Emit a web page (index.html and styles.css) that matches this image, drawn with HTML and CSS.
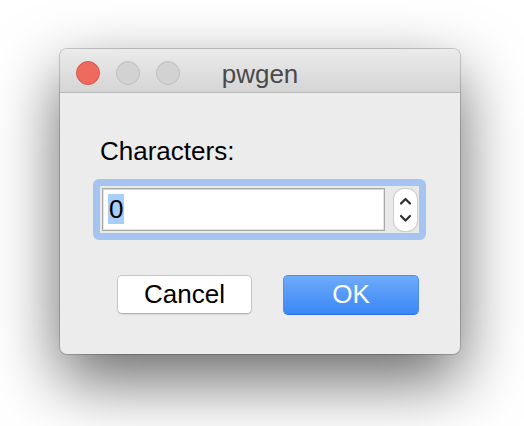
FILE: index.html
```html
<!DOCTYPE html>
<html lang="en">
<head>
<meta charset="utf-8">
<title>pwgen</title>
<link rel="stylesheet" href="styles.css">
</head>
<body>
<div class="page">
  <div class="window">
    <div class="titlebar">
      <div class="lights">
        <span class="light close"></span>
        <span class="light"></span>
        <span class="light"></span>
      </div>
      <div class="title">pwgen</div>
      <div></div>
    </div>
    <div class="content">
      <div class="label">Characters:</div>
      <div class="ring">
        <div class="field"><span class="sel">0</span></div>
        <div class="stepper">
          <svg width="23" height="42" viewBox="0 0 23 42">
            <polyline points="7,14.5 11.5,10 16,14.5" fill="none" stroke="#2e2e2e" stroke-width="2.2" stroke-linecap="round" stroke-linejoin="round"/>
            <polyline points="7,27 11.5,31.5 16,27" fill="none" stroke="#2e2e2e" stroke-width="2.2" stroke-linecap="round" stroke-linejoin="round"/>
          </svg>
        </div>
      </div>
      <div class="buttons">
        <div class="btn cancel">Cancel</div>
        <div class="btn ok">OK</div>
      </div>
    </div>
  </div>
</div>
</body>
</html>
```

FILE: styles.css
```css
html, body {
  margin: 0;
  padding: 0;
  background: #ffffff;
  font-family: "Liberation Sans", Arial, sans-serif;
}
.page {
  padding: 49px 0 0 60px;
  height: 426px;
  box-sizing: border-box;
  overflow: hidden;
}
.window {
  width: 400px;
  height: 305px;
  border-radius: 7px;
  background: #ececec;
  overflow: hidden;
  box-shadow: 0 26px 66px rgba(0, 0, 0, 0.6), 0 0 0 1px rgba(0, 0, 0, 0.18);
  display: flex;
  flex-direction: column;
}
.titlebar {
  border-bottom: 1px solid #b9b9b9;
  background: linear-gradient(#ebebeb, #d5d5d5);
  display: grid;
  grid-template-columns: 1fr auto 1fr;
  align-items: start;
  padding-top: 12px;
  flex: none;
  height: 31px;
}
.lights {
  display: flex;
  gap: 16px;
  padding-left: 16px;
}
.light {
  width: 22px;
  height: 22px;
  border-radius: 50%;
  background: #d2d2d2;
  border: 1px solid #bfbfbf;
}
.light.close {
  background: #ee6a5f;
  border-color: #d5574b;
}
.title {
  font-size: 26px;
  line-height: 26px;
  color: #4a4a4a;
}
.content {
  padding: 43px 34px 0 33px;
}
.label {
  font-size: 26px;
  line-height: 30px;
  color: #000;
  padding-left: 7px;
}
.ring {
  margin-top: 13px;
  width: 333px;
  height: 61px;
  box-sizing: border-box;
  border: 7px solid #a5c4f0;
  border-radius: 6px;
  background: #e9e9e9;
  padding: 2px 2px 0 2px;
  display: flex;
  align-items: flex-start;
  gap: 9px;
}
.field {
  width: 283px;
  height: 43px;
  box-sizing: border-box;
  background: #fff;
  border: 1px solid #a8a8a8;
  box-shadow: inset 0 1px 0 #d8d8d8, inset 0 0 0 1px #e4e4e4;
  padding: 5px 0 0 5px;
}
.sel {
  display: inline-block;
  background: #aacefa;
  font-size: 26px;
  line-height: 30px;
  color: #000;
  padding: 0 1px;
}
.stepper {
  margin-top: 1px;
  width: 23px;
  height: 42px;
  box-sizing: border-box;
  background: #fff;
  border-radius: 10px;
  box-shadow: 0 0 0 1px #cdcdcd, 0 1px 1px rgba(0, 0, 0, 0.15);
  display: flex;
}
.stepper svg {
  display: block;
}
.buttons {
  margin-top: 35px;
  display: flex;
  justify-content: flex-end;
  gap: 31px;
  padding-right: 7px;
}
.btn {
  height: 39px;
  box-sizing: border-box;
  border-radius: 5px;
  font-size: 26px;
  line-height: 37px;
  text-align: center;
}
.cancel {
  width: 135px;
  background: #fff;
  border: 1px solid #c6c6c6;
  border-bottom-color: #b0b0b0;
  color: #000;
  box-shadow: 0 1px 1px rgba(0, 0, 0, 0.08);
}
.ok {
  width: 136px;
  height: 40px;
  background: linear-gradient(#6eabf9, #3a86f7);
  border: 1px solid #4d8ef2;
  border-bottom-color: #2e6fe2;
  color: #fff;
}
```
